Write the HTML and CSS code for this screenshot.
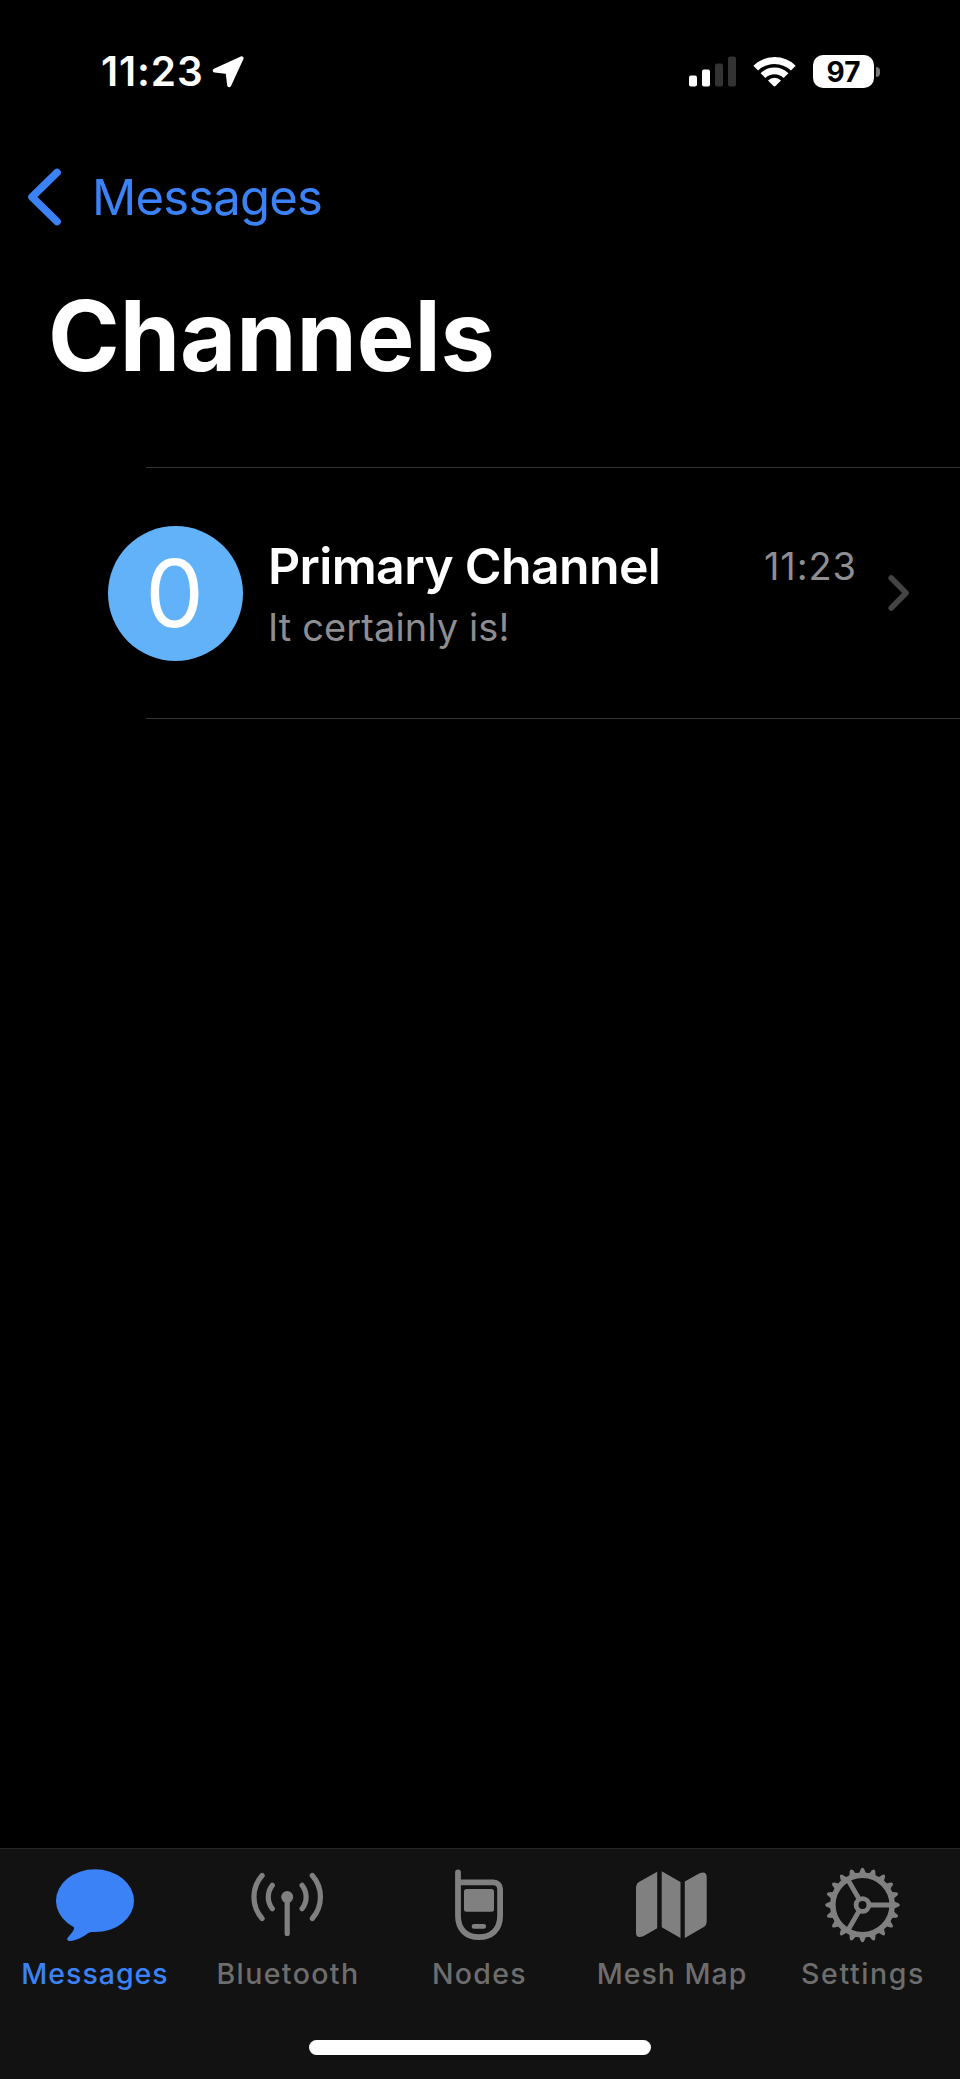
FILE: index.html
```html
<!DOCTYPE html>
<html lang="en">
<head>
<meta charset="utf-8">
<title>Channels</title>
<link rel="stylesheet" href="styles.css">
</head>
<body>
<header class="status">
  <span class="clock">11:23</span>
  <svg class="location" width="32" height="32" viewBox="0 0 32 32"><path d="M29.600 2.200 2.800 14.600 15.600 15.900 17.200 29.200Z" fill="#fff" stroke="#fff" stroke-width="4" stroke-linejoin="round"/></svg>
  <svg class="signal" width="47" height="31" viewBox="0 0 47 31"><g fill="#fff"><rect y="19.500" width="8" height="11" rx="2"/><rect x="13" y="13.500" width="8" height="17" rx="2"/></g><g fill="#333"><rect x="26" y="7.500" width="8" height="23" rx="2"/><rect x="39" y=".5" width="8" height="30" rx="2"/></g></svg>
  <svg class="wifi" width="43" height="32" viewBox="0 0 43 32"><g fill="none" stroke="#fff" stroke-width="6.800"><path d="M2.700 12.100A27.100 27.100 0 0 1 40.300 12.100"/><path d="M10 19.600A16.400 16.400 0 0 1 33 19.600"/></g><path d="M15 24.400A9.400 9.400 0 0 1 28 24.400L22.500 30.100Q21.500 31 20.500 30.100Z" fill="#fff"/></svg>
  <span class="battery">97</span>
  <span class="battery-cap"></span>
</header>
<nav class="nav">
  <svg width="34" height="58" viewBox="0 0 34 58"><path d="M30 4.500 5 29 30 53.500" fill="none" stroke="#3b82f7" stroke-width="7.600" stroke-linecap="round" stroke-linejoin="round"/></svg>
  <span class="back">Messages</span>
</nav>
<h1 class="title">Channels</h1>
<main class="list">
  <div class="row">
    <div class="avatar"><span>0</span></div>
    <div class="info">
      <div class="line"><span class="name">Primary Channel</span><span class="time">11:23</span></div>
      <div class="preview">It certainly is!</div>
    </div>
    <svg class="chevron" width="22" height="38" viewBox="0 0 22 38"><path d="M3.200 4 18 19 3.200 34" fill="none" stroke="#444446" stroke-width="5.600" stroke-linecap="round" stroke-linejoin="round"/></svg>
  </div>
</main>
<footer class="tabbar">
  <div class="tabs">
    <div class="tab active">
      <svg width="84" height="84" viewBox="0 0 84 84" fill="#3b82f7"><ellipse cx="41" cy="40.700" rx="39" ry="31.400"/><path d="M18 65C21 67.500 20.500 68.500 19 71 17.500 73.500 15.500 75.500 13.700 77.800 12.500 79.500 13.600 81 16 81 22.500 80.500 29.500 76.500 34.500 73 36.500 71.700 38 72 41 72L40 60Z"/></svg>
      <span class="label messages">Messages</span>
    </div>
    <div class="tab">
      <svg width="84" height="84" viewBox="0 0 84 84" fill="none" stroke="#808080" stroke-width="5.200" stroke-linecap="round"><circle cx="41.200" cy="37" r="6" fill="#808080" stroke="none"/><path d="M41.200 38V73.500M26.300 25.300A19 19 0 0 0 26.300 48.700M56.100 25.300A19 19 0 0 1 56.100 48.700M16.100 15.500A32.500 32.500 0 0 0 16.100 58.500M66.300 15.500A32.500 32.500 0 0 1 66.300 58.500"/></svg>
      <span class="label bluetooth">Bluetooth</span>
    </div>
    <div class="tab">
      <svg width="84" height="84" viewBox="0 0 84 84" fill="#808080"><path d="M20 12.300V56C20 70 29 77.200 41 77.200S62.100 70 62.100 56V29A6.600 6.600 0 0 0 55.500 22.300H20" fill="none" stroke="#808080" stroke-width="5.800" stroke-linecap="round"/><rect x="26" y="29" width="30" height="22.700" rx="2.500"/><rect x="33.700" y="64" width="14.400" height="4.800" rx="2.400"/></svg>
      <span class="label nodes">Nodes</span>
    </div>
    <div class="tab">
      <svg width="84" height="84" viewBox="0 0 84 84" fill="#808080"><path d="M27.200 11.700V68.300L13.200 76.200Q6 78.500 6 73V27Q6 24 8.500 22.300ZM31.700 11.200 50.500 22V78L31.700 67.300ZM54.800 21.600 69.500 13.200Q76.700 10.500 76.700 17V61.500Q76.700 65 74.200 66.700L54.800 78Z"/></svg>
      <span class="label map">Mesh Map</span>
    </div>
    <div class="tab">
      <svg width="84" height="84" viewBox="0 0 84 84">
        <defs><path id="tooth" d="M31-3.700 36-1.700Q37.300-.900 37.300 0T36 1.700L31 3.700Z"/><g id="teeth"><use href="#tooth"/><use href="#tooth" transform="rotate(18)"/><use href="#tooth" transform="rotate(36)"/><use href="#tooth" transform="rotate(54)"/><use href="#tooth" transform="rotate(72)"/></g></defs>
        <g transform="translate(40.500 45)" fill="#808080"><use href="#teeth"/><use href="#teeth" transform="rotate(90)"/><use href="#teeth" transform="rotate(180)"/><use href="#teeth" transform="rotate(270)"/><g fill="none" stroke="#808080" stroke-width="4.800"><circle r="29.700" stroke-width="5.600"/><circle r="6.400"/><path d="M8 0H28M-4-6.930-14-24.250M-4 6.930-14 24.250"/></g></g>
      </svg>
      <span class="label settings">Settings</span>
    </div>
  </div>
  <div class="home"></div>
</footer>
</body>
</html>
```
FILE: styles.css
```css
* { box-sizing: border-box; }
body {
  margin: 0;
  width: 960px;
  height: 2079px;
  display: flex;
  flex-direction: column;
  background: #000;
  color: #fff;
  font-family: Inter, "Liberation Sans", sans-serif;
  white-space: nowrap;
  overflow: hidden;
}
svg { display: block; flex: none; }
.status {
  height: 143px;
  padding-left: 101px;
  display: flex;
  align-items: center;
}
.clock { width: 111px; font-size: 40.5px; font-weight: 600; letter-spacing: 0.9px; }
.signal { margin-left: 445px; }
.wifi { margin-left: 17px; }
.battery {
  width: 61px;
  height: 33px;
  margin-left: 17px;
  border-radius: 10px;
  background: #fff;
  color: #000;
  font-size: 28px;
  font-weight: 650;
  line-height: 34px;
  text-align: center;
}
.battery-cap {
  width: 4px;
  height: 10px;
  margin-left: 2px;
  border-radius: 0 5px 5px 0;
  background: #777;
}
.nav {
  height: 108px;
  padding-left: 27px;
  display: flex;
  align-items: center;
  color: #3b82f7;
}
.back { margin-left: 31px; font-size: 49px; letter-spacing: -0.8px; }
.title {
  height: 169px;
  margin: 0;
  padding-left: 48px;
  font-size: 97px;
  font-weight: 700;
  line-height: 169px;
  letter-spacing: -0.1px;
}
.list { padding-top: 47px; flex: 1; }
.row {
  height: 252px;
  padding-left: 108px;
  display: flex;
  align-items: center;
  background:
    linear-gradient(#333335, #333335) 146px 0 / 814px 1px no-repeat,
    linear-gradient(#333335, #333335) 146px 100% / 814px 1px no-repeat;
}
.avatar {
  width: 135px;
  height: 135px;
  padding-right: 2px;
  border-radius: 50%;
  background: #62b2f9;
  font-size: 93px;
  line-height: 135px;
  text-align: center;
}
.info { width: 589px; margin-left: 25px; padding-top: 7px; }
.line { display: flex; justify-content: space-between; line-height: 61px; }
.name { font-size: 50px; font-weight: 600; letter-spacing: -0.65px; }
.time { font-size: 38px; line-height: 60px; letter-spacing: 0.9px; color: #8d8d92; }
.preview { font-size: 38px; line-height: 61px; letter-spacing: 0.1px; color: #8d8d92; }
.chevron { margin-left: 31px; }
.tabbar {
  height: 231px;
  padding-top: 11px;
  border-top: 1px solid #262626;
  background: #121212;
}
.tabs { display: grid; grid-template-columns: repeat(5, 192px); }
.tab {
  display: flex;
  flex-direction: column;
  align-items: center;
  gap: 12px;
  color: #6d6d6d;
}
.active { color: #3b82f7; }
.label { font-size: 28.5px; font-weight: 500; line-height: 36px; letter-spacing: 1px; }
.messages { margin-right: 2px; }
.bluetooth { letter-spacing: 1.4px; }
.nodes { margin-right: 1px; letter-spacing: 1.3px; }
.settings { margin-right: 2px; letter-spacing: 1.6px; }
.home {
  width: 342px;
  height: 15px;
  margin: 48px auto 0;
  border-radius: 8px;
  background: #fff;
}
```
